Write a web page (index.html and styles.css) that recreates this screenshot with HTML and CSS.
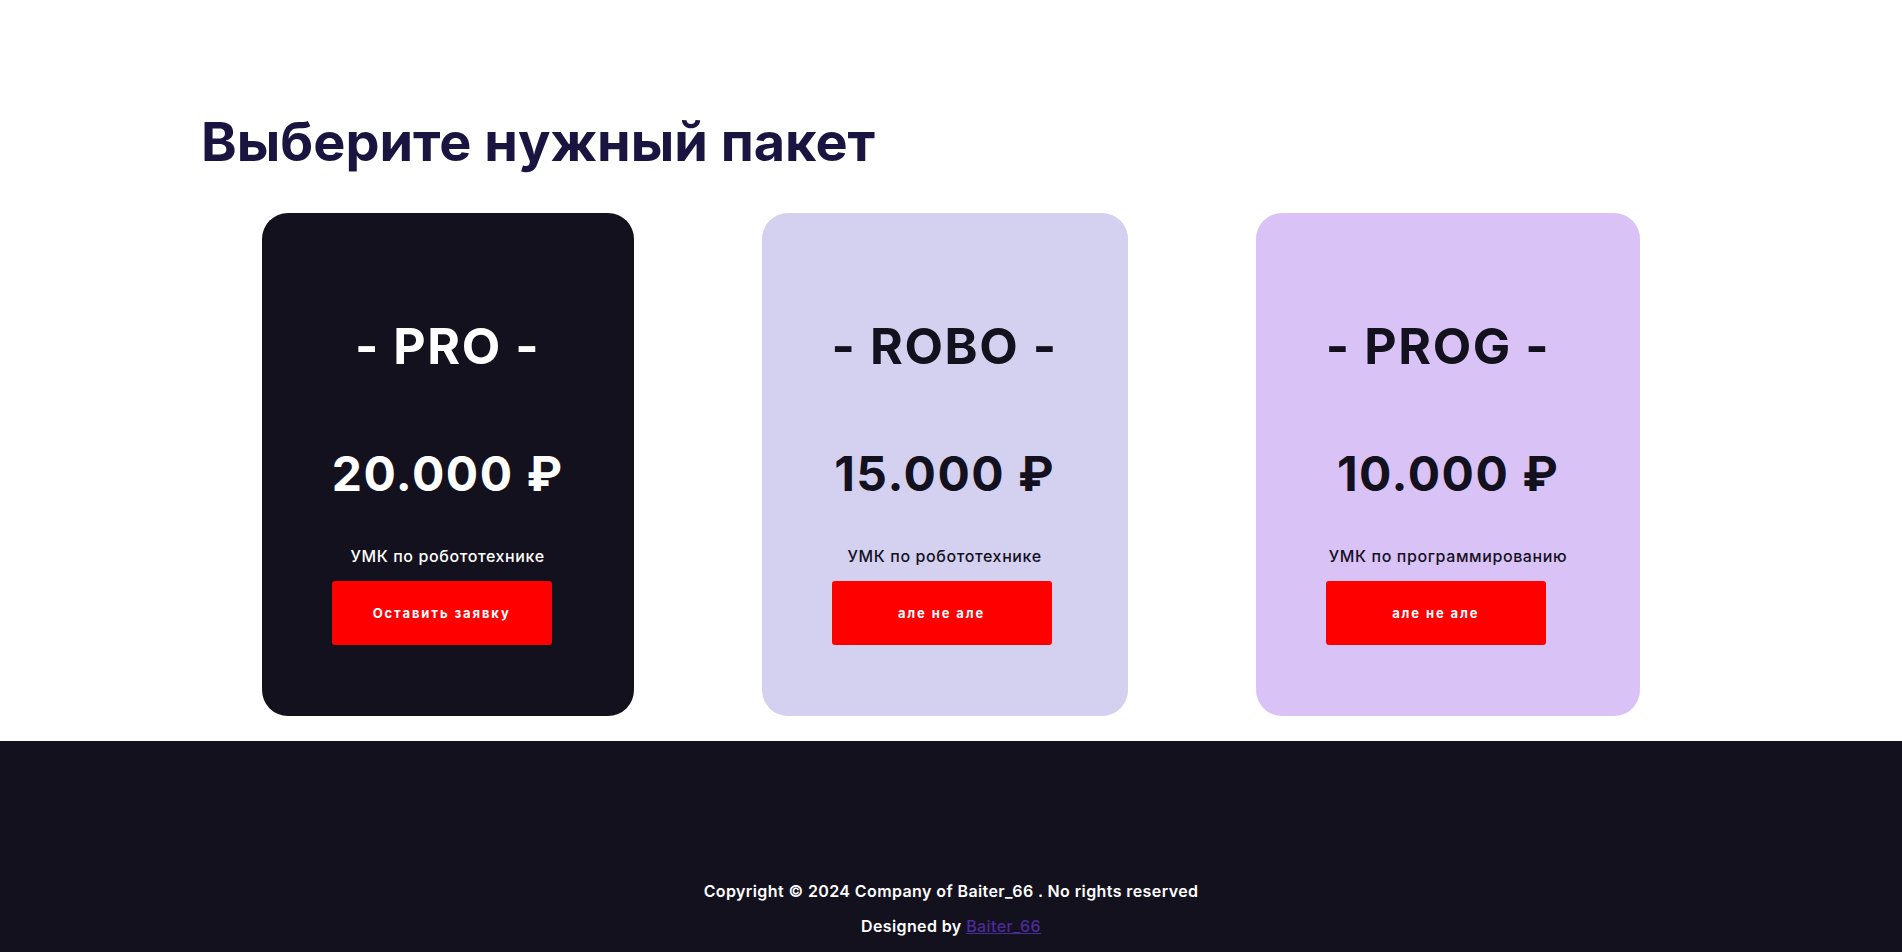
FILE: index.html
```html
<!DOCTYPE html>
<html lang="ru">
<head>
<meta charset="utf-8">
<title>Выберите нужный пакет</title>
<link rel="stylesheet" href="styles.css">
</head>
<body>
<main class="pricing">
  <div class="container">
    <h1 class="pricing-title">Выберите нужный пакет</h1>
    <div class="cards">
      <div class="card card-dark">
        <h2 class="card-title">- PRO -</h2>
        <div class="card-price">20.000 ₽</div>
        <p class="card-desc">УМК по робототехнике</p>
        <a class="card-btn" href="#">Оставить заявку</a>
      </div>
      <div class="card card-lavender">
        <h2 class="card-title">- ROBO -</h2>
        <div class="card-price">15.000 ₽</div>
        <p class="card-desc">УМК по робототехнике</p>
        <a class="card-btn" href="#">але не але</a>
      </div>
      <div class="card card-violet">
        <h2 class="card-title card-title-shift">- PROG -</h2>
        <div class="card-price">10.000 ₽</div>
        <p class="card-desc">УМК по программированию</p>
        <a class="card-btn" href="#">але не але</a>
      </div>
    </div>
  </div>
</main>
<footer class="footer">
  <p class="footer-line">Copyright © 2024 Company of Baiter_66 . No rights reserved</p>
  <p class="footer-line">Designed by <a class="footer-link" href="#">Baiter_66</a></p>
</footer>
</body>
</html>
```

FILE: styles.css
```css
* { box-sizing: border-box; }

body {
  margin: 0;
  background: #ffffff;
  font-family: Inter, "Noto Sans", "DejaVu Sans", sans-serif;
  color: #14111f;
}

.pricing {
  padding-top: 109px;
  padding-bottom: 25px;
}

.container {
  max-width: 1500px;
  margin: 0 auto;
}

.pricing-title {
  margin: 0;
  font-size: 54px;
  line-height: 65px;
  font-weight: 700;
  color: #1a1540;
}

.cards {
  margin-top: 39px;
  display: flex;
  justify-content: center;
  gap: 128px;
}

.card {
  display: flex;
  flex-direction: column;
  align-items: flex-start;
  padding: 103px 70px 71px 70px;
  border-radius: 26px;
}

.card-dark { background: #14111f; color: #ffffff; }
.card-lavender { background: #d3d0f0; color: #14111f; }
.card-violet { background: #d9c2f5; color: #14111f; }

.card-title {
  align-self: stretch;
  margin: 0;
  font-size: 50px;
  line-height: 60px;
  font-weight: 700;
  text-align: center;
  letter-spacing: 1.6px;
}

.card-title-shift { padding-right: 20px; }

.card-price {
  align-self: stretch;
  margin-top: 69px;
  font-size: 48px;
  line-height: 58px;
  font-weight: 700;
  text-align: center;
  letter-spacing: 1.5px;
}

.card-desc {
  align-self: stretch;
  margin: 43px 0 0;
  font-size: 16px;
  line-height: 20px;
  font-weight: 500;
  text-align: center;
  letter-spacing: 0.6px;
}

.card-btn {
  margin-top: 15px;
  width: 220px;
  height: 64px;
  display: flex;
  align-items: center;
  justify-content: center;
  background: #ff0000;
  color: #ffffff;
  border-radius: 3px;
  font-size: 13px;
  font-weight: 700;
  letter-spacing: 1.9px;
  text-decoration: none;
}

.footer {
  background: #14111f;
  color: #ffffff;
  text-align: center;
  padding: 140px 0 20px;
}

.footer-line {
  margin: 0 0 15px;
  font-size: 16px;
  line-height: 20px;
  font-weight: 600;
  letter-spacing: 0.4px;
}

.footer-link {
  color: #4b2a9a;
  font-weight: 500;
}
```
